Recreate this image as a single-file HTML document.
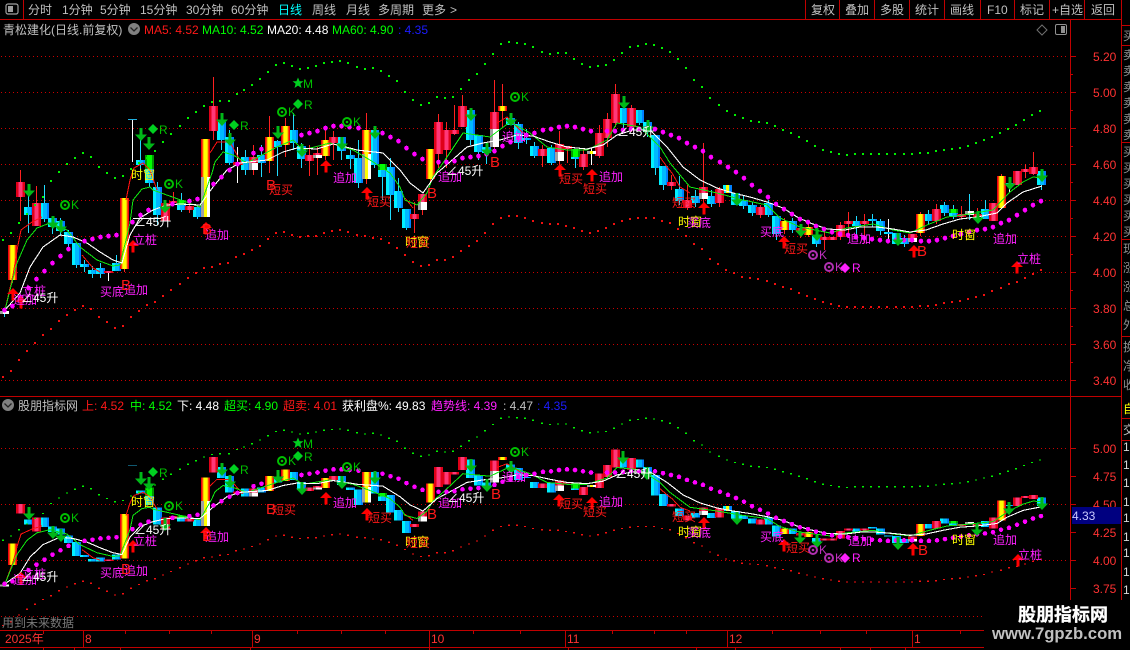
<!DOCTYPE html>
<html><head><meta charset="utf-8"><style>
html,body{margin:0;padding:0;background:#000;width:1130px;height:650px;overflow:hidden}
svg{display:block}
text{font-family:"Liberation Sans","WenQuanYi Zen Hei","Noto Sans CJK SC",sans-serif;font-size:12px}
.m{fill:#ff20ff}.r{fill:#ff1818}.y{fill:#ffff00}.w{fill:#fff}.g{fill:#00c000}.p{fill:#c030c0}
.t{fill:#c0c0c0}.a{fill:#ff3232}.b{fill:#1c1cff}.n{fill:#00ff00}.h{fill:#909090}
.B{font-size:15px}
</style></head><body>
<svg xmlns="http://www.w3.org/2000/svg" width="1130" height="650" viewBox="0 0 1130 650">
<defs>
<path id="bl" fill="none" d="M28.5 207V215M44.5 203V219M52.5 218V227M60.5 221V231M68.5 232V244M76.5 243V265M84.5 264V267M92.5 270V274M100.5 268V274M116.5 263V271M140.5 160V165M149.5 169V183M157.5 187V215M181.5 205V210M197.5 207V217M221.5 122V140M229.5 137V163M245.5 157V170M261.5 155V163M277.5 141V147M293.5 130V143M301.5 146V159M341.5 137V151M350.5 155V159M358.5 158V183M374.5 130V165M382.5 170V177M390.5 167V195M398.5 191V208M406.5 209V228M470.5 110V140M478.5 135V152M486.5 147V153M510.5 118V125M518.5 124V143M526.5 138V140M534.5 146V156M551.5 148V163M575.5 157V159M623.5 108V123M639.5 110V123M647.5 122V132M655.5 135V168M663.5 166V185M679.5 189V201M695.5 196V203M711.5 196V204M727.5 185V193M735.5 193V205M743.5 200V206M752.5 205V213M768.5 203V215M776.5 216V234M792.5 221V230M816.5 236V244M856.5 221V226M872.5 219V221M880.5 221V231M888.5 232V234M896.5 233V244M904.5 238V244M928.5 214V221M944.5 205V213M953.5 213V217M985.5 209V219M1009.5 183V185M1041.5 171V185"/>
<path id="rd" fill="none" d="M20.5 182V197M36.5 203V226M108.5 271V273M165.5 203V221M173.5 201V203M189.5 206V210M213.5 106V131M237.5 162V165M253.5 157V163M309.5 155V161M317.5 153V155M333.5 137V143M414.5 214V219M422.5 194V202M438.5 122V154M446.5 130V150M454.5 130V134M462.5 106V127M494.5 112V129M542.5 149V156M559.5 144V152M567.5 146V149M583.5 154V167M599.5 133V156M607.5 119V138M615.5 94V123M631.5 108V127M671.5 182V186M687.5 200V208M703.5 187V193M719.5 189V203M760.5 207V215M800.5 228V232M824.5 237V240M832.5 237V240M840.5 225V237M848.5 221V224M864.5 221V224M912.5 234V238M936.5 209V221M961.5 214V217M977.5 214V217M993.5 203V221M1017.5 171V185M1025.5 169V172M1033.5 167V174"/>
<path id="yl" fill="none" d="M12.5 245V280M124.5 198V269M205.5 139V177M269.5 137V161M285.5 126V145M325.5 140V156M366.5 130V154M430.5 149V179M502.5 106V111M784.5 221V230M808.5 227V235M920.5 214V233M1001.5 176V208"/>
<path id="gy" fill="none" d="M4.5 311V314M205.5 177V217M253.5 163V170M317.5 155V158M366.5 154V179M422.5 202V210M494.5 129V147M559.5 152V161M591.5 151V154M703.5 193V199M912.5 238V242M969.5 211V215"/>
<path id="gn" fill="none" d="M149.5 155V169M181.5 200V205M382.5 164V170M575.5 149V157M953.5 209V213"/>
<path id="yc" fill="none" d="M205.5 177V217M366.5 154V179M727.5 185V193M591.5 151V154"/>
<path id="dm" fill="none" vector-effect="non-scaling-stroke" stroke-linecap="round" d="M4.5 310v.1M12.5 306v.1M20.5 298v.1M28.5 288v.1M36.5 279v.1M44.5 271v.1M52.5 263v.1M60.5 256v.1M68.5 249v.1M84.5 241v.1M92.5 239v.1M100.5 237v.1M108.5 236v.1M116.5 235v.1M132.5 222v.1M140.5 215v.1M148.5 210v.1M172.5 204v.1M189.5 201v.1M197.5 199v.1M213.5 184v.1M221.5 177v.1M229.5 170v.1M237.5 164v.1M253.5 153v.1M261.5 149v.1M301.5 135v.1M309.5 133v.1M317.5 131v.1M325.5 128v.1M333.5 126v.1M341.5 126v.1M349.5 127v.1M358.5 128v.1M382.5 133v.1M390.5 137v.1M398.5 141v.1M406.5 148v.1M414.5 154v.1M422.5 159v.1M438.5 162v.1M446.5 162v.1M454.5 161v.1M462.5 158v.1M470.5 157v.1M478.5 156v.1M486.5 154v.1M494.5 151v.1M502.5 146v.1M510.5 142v.1M518.5 138v.1M526.5 135v.1M534.5 133v.1M543 130v.1M551 129v.1M559 127v.1M567 126v.1M575 127v.1M583 129v.1M591 131v.1M607 131v.1M615 131v.1M623 130v.1M631 129v.1M639 129v.1M647 128v.1M655 129v.1M663 132v.1M671 135v.1M679 138v.1M687 143v.1M695 147v.1M703 151v.1M711 157v.1M720 162v.1M728 167v.1M736 172v.1M744 178v.1M752 185v.1M760 191v.1M768 197v.1M776 204v.1M784 209v.1M792 214v.1M800 219v.1M808 222v.1M816 226v.1M824 229v.1M832 232v.1M840 234v.1M848 235v.1M856 237v.1M864 238v.1M872 239v.1M880 240v.1M888 241v.1M896 240v.1M904 240v.1M912 240v.1M921 241v.1M929 241v.1M937 240v.1M945 238v.1M953 236v.1M961 234v.1M969 232v.1M977 230v.1M985 229v.1M993 227v.1M1001 223v.1M1009 220v.1M1017 215v.1M1025 210v.1M1033 205v.1M1041 201v.1"/>
<path id="dg" fill="none" vector-effect="non-scaling-stroke" d="M3 239v2M11 232v2M19 222v2M27 213v2M35 204v2M43 196v2M51 180v2M59 171v2M67 163v2M75 157v2M83 152v2M91 156v2M99 166v2M107 172v2M115 177v2M123 175v2M131 168v2M139 162v2M147 157v2M155 150v2M163 141v2M171 133v2M180 125v2M188 117v2M196 111v2M204 105v2M212 101v2M220 100v2M229 100v2M237 93v2M244 89v2M252 84v2M260 78v2M268 71v2M276 64v2M284 62v2M292 65v2M300 68v2M308 67v2M316 65v2M324 62v2M332 61v2M340 60v2M348 62v2M357 66v2M365 68v2M373 67v2M381 70v2M389 75v2M397 80v2M405 91v2M413 99v2M421 104v2M429 102v2M437 96v2M445 97v2M453 96v2M461 88v2M469 79v2M477 73v2M485 63v2M493 53v2M501 43v2M509 41v2M517 42v2M525 43v2M533 46v2M542 51v2M550 53v2M558 52v2M566 52v2M574 58v2M582 63v2M590 66v2M598 65v2M606 64v2M614 59v2M622 52v2M630 46v2M638 45v2M646 43v2M654 44v2M662 47v2M670 51v2M678 58v2M686 67v2M694 79v2M702 86v2M710 97v2M719 104v2M727 110v2M735 114v2M743 117v2M751 120v2M759 121v2M767 122v2M775 125v2M783 129v2M791 132v2M799 136v2M807 140v2M815 145v2M823 149v2M831 151v2M839 153v2M847 154v2M855 153v2M863 153v2M871 153v2M879 153v2M887 153v2M895 153v2M904 153v2M912 153v2M920 152v2M928 152v2M936 150v2M944 149v2M952 148v2M960 147v2M968 145v2M976 142v2M984 139v2M992 136v2M1000 132v2M1008 128v2M1016 124v2M1024 119v2M1032 114v2M1040 110v2"/>
<path id="dr" fill="none" vector-effect="non-scaling-stroke" d="M3 376v2M11 370v2M19 359v2M27 350v2M35 342v2M43 334v2M51 328v2M59 320v2M67 314v2M75 309v2M83 305v2M91 308v2M99 316v2M107 321v2M115 327v2M123 325v2M131 316v2M139 310v2M147 304v2M155 301v2M163 295v2M171 289v2M180 283v2M188 277v2M196 272v2M204 267v2M212 266v2M220 263v2M228 262v2M236 256v2M244 253v2M252 249v2M260 245v2M268 238v2M276 232v2M284 231v2M292 234v2M300 236v2M308 235v2M316 235v2M324 232v2M332 230v2M340 229v2M348 231v2M357 234v2M365 235v2M373 237v2M381 238v2M389 242v2M397 247v2M405 254v2M413 261v2M421 265v2M429 264v2M437 259v2M445 259v2M453 256v2M461 250v2M469 245v2M477 240v2M485 232v2M493 223v2M501 217v2M509 215v2M517 215v2M525 217v2M533 220v2M542 222v2M550 223v2M558 223v2M566 225v2M574 227v2M582 230v2M590 232v2M598 230v2M606 227v2M614 223v2M622 220v2M630 218v2M638 217v2M646 217v2M654 217v2M662 220v2M670 222v2M678 228v2M686 235v2M694 243v2M702 248v2M710 258v2M718 263v2M726 269v2M734 272v2M742 276v2M750 277v2M758 278v2M767 280v2M775 283v2M783 286v2M791 288v2M799 292v2M807 295v2M815 298v2M823 301v2M831 303v2M839 305v2M847 306v2M855 306v2M863 306v2M871 306v2M879 306v2M887 306v2M896 306v2M904 306v2M912 306v2M920 305v2M928 305v2M936 304v2M944 302v2M952 301v2M960 300v2M968 298v2M976 296v2M984 294v2M992 290v2M1001 287v2M1009 283v2M1017 281v2M1025 277v2M1033 273v2M1041 269v2"/>
<polyline id="lw" fill="none" vector-effect="non-scaling-stroke" points="5,310 20,293 30,267 43,247 60,235 73,237 87,243 100,252 113,260 122,263 130,235 140,218 153,210 167,205 180,204 200,205 213,187 227,170 240,163 267,160 283,152 297,148 317,149 333,144 350,148 357,150 383,153 400,170 410,183 423,193 437,173 450,162 467,147 483,143 500,140 517,135 533,136 550,142 567,147 587,149 603,145 617,135 633,130 650,130 667,147 683,167 700,180 717,188 733,193 750,197 767,202 783,208 797,217 810,223 827,229 845,230 860,227 877,227 893,229 910,232 926,230 943,224 960,219 977,217 997,213 1007,203 1023,192 1042,186"/>
<polyline id="lg" fill="none" vector-effect="non-scaling-stroke" points="5,310 10,290 17,263 27,240 37,228 50,223 67,230 80,247 97,260 113,266 120,265 130,223 133,200 142,189 150,187 153,190 200,207 212,173 215,162 223,152 233,155 247,163 277,147 293,140 303,150 330,143 353,150 370,160 390,173 400,187 405,200 417,205 427,193 433,177 443,163 463,133 490,137 510,122 530,133 547,147 567,150 587,150 607,140 617,123 640,127 660,147 670,163 690,187 717,193 743,200 767,205 780,218 800,227 830,233 847,228 873,224 893,230 910,233 927,225 947,217 963,215 993,210 1010,192 1023,182 1033,177 1042,178"/>
<path id="lr" fill="none" vector-effect="non-scaling-stroke" d="M5 310L13 275L18 245L21 230L32 222L42 217M82 255L93 268L100 272M126 200L130 180L134 168L143 163L150 170L157 190M210 153L217 142L230 142L237 155L243 165M405 198L413 208M497 123L507 117L523 133M660 157L667 167L672 173L680 187L690 193"/>
<g id="bodies" shape-rendering="crispEdges">
<use href="#bl" stroke="#0080ff" stroke-width="9"/><use href="#bl" x="-1" stroke="#00b8ff" stroke-width="7"/><use href="#bl" x="-3" stroke="#00f0ff" stroke-width="3"/>
<use href="#rd" stroke="#e00018" stroke-width="9"/><use href="#rd" stroke="#ff3878" stroke-width="4"/>
<use href="#yl" stroke="#f00010" stroke-width="9"/><use href="#yl" stroke="#ff9000" stroke-width="6"/><use href="#yl" stroke="#ffff00" stroke-width="4"/>
<use href="#gy" stroke="#a0a0a0" stroke-width="9"/><use href="#gy" x="1.5" stroke="#fff" stroke-width="6"/>
<use href="#gn" stroke="#009a00" stroke-width="9"/><use href="#gn" stroke="#00ff00" stroke-width="5"/>
<use href="#yc" stroke="#ffff00" stroke-width="3"/>
<path d="M128 119.5H137" stroke="#20b0e0" stroke-width="1"/>
</g>
<g id="ov" shape-rendering="crispEdges">
<use href="#dr" stroke="#f01010" stroke-width="2"/>
<use href="#dg" stroke="#00f000" stroke-width="2"/>
<use href="#lr" stroke="#ff1010" stroke-width="1"/>
<use href="#lg" stroke="#10e810" stroke-width="1"/>
<use href="#lw" stroke="#fff" stroke-width="1.1"/>
<use href="#dm" stroke="#ff00ff" stroke-width="4.6"/>
</g>
<path id="ga" fill="#00b818" d="M-1.5 0h3v6.5h4.5L0 13l-6-6.5h4.5z"/>
<path id="ra" fill="#ff0000" d="M0 0l6 6h-4.5v6.5h-3V6H-6z"/>
<g id="ok"><circle r="4" fill="none" stroke-width="2"/><circle r="1.3" stroke="none"/></g>
<path id="di" d="M0-5L5 0L0 5L-5 0z"/>
<path id="st" d="M0-5.5L1.6-1.7L5.5-1.7L2.4.8L3.5 5L0 2.6L-3.5 5L-2.4.8L-5.5-1.7L-1.6-1.7z"/>
</defs>

<g stroke="#cc0000" stroke-dasharray="1 3" fill="none" shape-rendering="crispEdges">
<path d="M1 56.5H1068M1 92.5H1068M1 128.5H1068M1 164.5H1068M1 200.5H1068M1 236.5H1068M1 272.5H1068M1 308.5H1068M1 344.5H1068M1 380.5H1068"/>
<path d="M1 448.5H1068M1 504.5H1068M1 560.5H1068M1 616.5H1068"/>
</g>

<g fill="none" stroke-width="1" shape-rendering="crispEdges">
<path stroke="#20dcff" d="M28.5 193V233M44.5 185V222M52.5 218V234M60.5 218V236M68.5 230V248M76.5 243V268M84.5 260V272M92.5 266V278M100.5 263V278M116.5 255V271M140.5 135V178M149.5 183V187M157.5 182V225M181.5 193V212M197.5 205V219M221.5 117V150M229.5 130V165M245.5 150V175M261.5 145V177M277.5 140V176M293.5 113V150M301.5 143V168M341.5 137V160M350.5 150V169M358.5 140V188M374.5 126V168M382.5 165V200M390.5 158V220M398.5 178V212M406.5 209V230M470.5 108V145M478.5 135V160M486.5 143V164M518.5 122V149M526.5 129V144M534.5 142V158M551.5 145V165M575.5 149V168M623.5 108V130M639.5 110V125M647.5 122V137M655.5 135V175M663.5 166V190M679.5 176V205M695.5 190V207M711.5 190V207M743.5 196V209M752.5 202V216M768.5 200V217M776.5 216V240M792.5 218V233M816.5 236V247M856.5 216V236M872.5 214V227M880.5 219V235M904.5 235V247M928.5 210V224M944.5 202V216M953.5 205V219M969.5 194V220M985.5 200V219M1041.5 171V190M4.5 309V317"/>
<path stroke="#ff2020" d="M12.5 280V283M20.5 170V221M36.5 186V226M124.5 269V272M173.5 192V204M189.5 200V213M213.5 77V140M253.5 145V175M269.5 116V173M285.5 118V157M309.5 145V176M317.5 147V175M325.5 130V160M333.5 131V160M366.5 113V184M414.5 202V233M422.5 210V215M430.5 179V184M438.5 114V168M446.5 122V168M454.5 105V135M462.5 95V127M494.5 80V152M502.5 84V127M542.5 145V167M559.5 131V165M567.5 146V163M583.5 148V170M599.5 125V158M607.5 113V147M615.5 84V127M631.5 105V132M671.5 175V190M687.5 185V210M703.5 143V205M719.5 187V207M760.5 205V218M784.5 218V234M800.5 224V238M808.5 224V237M824.5 227V250M840.5 222V240M848.5 212V237M864.5 214V243M920.5 212V236M936.5 204V224M961.5 206V219M977.5 208V220M1025.5 164V178M1033.5 152V175M1001.5 174V208"/>
<path stroke="#fff" d="M108.5 271V281M132.5 119V162M237.5 147V183M888.5 219V239M1009.5 185V193M591.5 148V165M104 272.5H113M133 218.5H162"/>
</g>
<use href="#bodies"/>
<use href="#ov"/>

<!-- bottom panel series -->
<g transform="matrix(1 0 0 .6222 0 390.95)">
<use href="#bodies"/>
<use href="#ov"/>
</g>

<!-- top arrows -->
<g>
<use href="#ga" x="29" y="184"/><use href="#ga" x="53" y="216"/><use href="#ga" x="61" y="220"/><use href="#ga" x="141" y="128"/><use href="#ga" x="149" y="137"/><use href="#ga" x="165" y="200"/><use href="#ga" x="222" y="113"/><use href="#ga" x="230" y="133"/><use href="#ga" x="278" y="126"/><use href="#ga" x="302" y="144"/><use href="#ga" x="342" y="137"/><use href="#ga" x="375" y="126"/><use href="#ga" x="471" y="108"/><use href="#ga" x="487" y="143"/><use href="#ga" x="511" y="113"/><use href="#ga" x="624" y="96"/><use href="#ga" x="648" y="120"/><use href="#ga" x="737" y="193"/><use href="#ga" x="801" y="224"/><use href="#ga" x="817" y="228"/><use href="#ga" x="898" y="233"/><use href="#ga" x="978" y="211"/><use href="#ga" x="1010" y="177"/><use href="#ga" x="1042" y="169"/>
<use href="#ra" x="13" y="288"/><use href="#ra" x="21" y="296"/><use href="#ra" x="133" y="240"/><use href="#ra" x="206" y="222"/><use href="#ra" x="326" y="160"/><use href="#ra" x="367" y="187"/><use href="#ra" x="560" y="164"/><use href="#ra" x="592" y="169"/><use href="#ra" x="704" y="202"/><use href="#ra" x="784" y="236"/><use href="#ra" x="914" y="245"/><use href="#ra" x="1017" y="261"/>
<!-- bottom arrows -->
<use href="#ga" x="29" y="507"/><use href="#ga" x="53" y="526"/><use href="#ga" x="61" y="529"/><use href="#ga" x="141" y="472"/><use href="#ga" x="149" y="477"/><use href="#ga" x="165" y="518"/><use href="#ga" x="222" y="463"/><use href="#ga" x="230" y="475"/><use href="#ga" x="278" y="470"/><use href="#ga" x="302" y="482"/><use href="#ga" x="342" y="476"/><use href="#ga" x="375" y="471"/><use href="#ga" x="471" y="459"/><use href="#ga" x="487" y="479"/><use href="#ga" x="511" y="461"/><use href="#ga" x="623" y="451"/><use href="#ga" x="647" y="467"/><use href="#ga" x="737" y="512"/><use href="#ga" x="800" y="531"/><use href="#ga" x="817" y="535"/><use href="#ga" x="898" y="537"/><use href="#ga" x="977" y="523"/><use href="#ga" x="1009" y="502"/><use href="#ga" x="1042" y="497"/>
<use href="#ra" x="21" y="572"/><use href="#ra" x="133" y="540"/><use href="#ra" x="206" y="527"/><use href="#ra" x="326" y="492"/><use href="#ra" x="367" y="508"/><use href="#ra" x="559" y="494"/><use href="#ra" x="592" y="497"/><use href="#ra" x="704" y="517"/><use href="#ra" x="784" y="539"/><use href="#ra" x="913" y="543"/><use href="#ra" x="1018" y="554"/>
</g>

<!-- marks -->
<g fill="#00c000" stroke="#00c000">
<use href="#ok" x="65" y="205"/><use href="#ok" x="169" y="184"/><use href="#ok" x="282" y="112"/><use href="#ok" x="347" y="122"/><use href="#ok" x="515" y="97"/>
<use href="#ok" x="65" y="518"/><use href="#ok" x="169" y="506"/><use href="#ok" x="282" y="461"/><use href="#ok" x="347" y="467"/><use href="#ok" x="515" y="452"/>
</g>
<g fill="#00d020">
<use href="#di" x="153" y="129"/><use href="#di" x="234" y="125"/><use href="#di" x="298" y="104"/><use href="#st" x="298" y="83"/>
<use href="#di" x="153" y="472"/><use href="#di" x="234" y="469"/><use href="#di" x="298" y="456"/><use href="#st" x="298" y="443"/>
</g>
<g fill="#b030b0" stroke="#b030b0">
<use href="#ok" x="813" y="255"/><use href="#ok" x="829" y="267"/><use href="#ok" x="813" y="550"/><use href="#ok" x="829" y="558"/>
</g>
<g fill="#ff20ff"><use href="#di" x="845" y="268"/><use href="#di" x="845" y="558"/></g>
<g class="g">
<text x="71" y="209">K</text><text x="175" y="188">K</text><text x="288" y="116">K</text><text x="353" y="126">K</text><text x="521" y="101">K</text>
<text x="71" y="522">K</text><text x="175" y="510">K</text><text x="288" y="465">K</text><text x="353" y="471">K</text><text x="521" y="456">K</text>
<text x="159" y="134">R</text><text x="240" y="130">R</text><text x="304" y="109">R</text><text x="303" y="88">M</text>
<text x="159" y="477">R</text><text x="240" y="474">R</text><text x="304" y="461">R</text><text x="303" y="448">M</text>
</g>
<g class="p"><text x="819" y="259">K</text><text x="835" y="271">K</text><text x="819" y="554">K</text><text x="835" y="562">K</text></g>
<g class="m"><text x="852" y="272">R</text><text x="852" y="562">R</text></g>

<!-- top labels -->
<text class="m" x="22" y="295">立桩</text><text class="m" x="13" y="304">追加</text><text class="w" x="21" y="302">∠45升</text>
<text class="m" x="100" y="296">买底</text><text class="m" x="124" y="294">追加</text><text class="r B" x="121" y="290">B</text>
<text class="m" x="133" y="244">立桩</text><text class="y" x="131" y="179">时窗</text><text class="w" x="134" y="226">∠45升</text>
<text class="m" x="205" y="239">追加</text><text class="r B" x="202" y="234">B</text>
<text class="r" x="269" y="194">短买</text><text class="r B" x="266" y="190">B</text>
<text class="m" x="333" y="182">追加</text><text class="r" x="367" y="206">短买</text>
<text class="y" x="405" y="246">时窗</text><text class="r" x="406" y="247">短买</text><text class="r B" x="427" y="198">B</text>
<text class="m" x="438" y="181">追加</text><text class="w" x="446" y="175">∠45升</text><text class="r B" x="490" y="167">B</text>
<text class="m" x="502" y="141">追加</text><text class="r" x="559" y="183">短买</text><text class="r" x="583" y="193">短买</text><text class="m" x="599" y="181">追加</text>
<text class="w" x="617" y="136">∠45升</text><text class="r" x="672" y="207">短买</text><text class="y" x="678" y="226">时窗</text><text class="m" x="687" y="227">买底</text>
<text class="m" x="760" y="236">买底</text><text class="r" x="784" y="253">短买</text><text class="m" x="847" y="243">追加</text>
<text class="y" x="952" y="239">时窗</text><text class="r B" x="917" y="256">B</text><text class="m" x="993" y="243">追加</text><text class="m" x="1017" y="263">立桩</text>

<!-- bottom labels -->
<text class="m" x="22" y="578">立桩</text><text class="m" x="13" y="584">追加</text><text class="w" x="21" y="581">∠45升</text>
<text class="y" x="131" y="506">时窗</text><text class="w" x="134" y="534">∠45升</text><text class="m" x="133" y="545">立桩</text>
<text class="m" x="100" y="577">买底</text><text class="m" x="124" y="575">追加</text><text class="r B" x="121" y="574">B</text>
<text class="m" x="205" y="541">追加</text><text class="r B" x="202" y="541">B</text>
<text class="r" x="272" y="514">短买</text><text class="r B" x="266" y="514">B</text>
<text class="m" x="333" y="507">追加</text><text class="r" x="368" y="522">短买</text>
<text class="y" x="405" y="546">时窗</text><text class="r" x="406" y="547">短买</text><text class="r B" x="427" y="519">B</text>
<text class="m" x="438" y="507">追加</text><text class="w" x="447" y="502">∠45升</text><text class="r B" x="491" y="499">B</text>
<text class="m" x="502" y="481">追加</text><text class="r" x="559" y="508">短买</text><text class="r" x="583" y="516">短买</text><text class="m" x="599" y="506">追加</text>
<text class="w" x="615" y="478">∠45升</text><text class="r" x="672" y="521">短买</text><text class="y" x="678" y="536">时窗</text><text class="m" x="687" y="537">买底</text>
<text class="m" x="760" y="541">买底</text><text class="r" x="786" y="552">短买</text><text class="m" x="848" y="545">追加</text>
<text class="y" x="952" y="544">时窗</text><text class="r B" x="918" y="555">B</text><text class="m" x="993" y="544">追加</text><text class="m" x="1018" y="559">立桩</text>
<text x="2" y="627" style="fill:#787878">用到未来数据</text>

<!-- frame -->
<g stroke="#c00000" fill="none" shape-rendering="crispEdges">
<path d="M0 19.5H1122M0 396.5H1122M0 630.5H1122M0 647.5H1130M23.5 0V19M805.5 0V19M839.5 0V19M874.5 0V19M909.5 0V19M944.5 0V19M980.5 0V19M1014.5 0V19M1049.5 0V19M1084.5 0V19M1121.5 0V630M1070.5 19V630"/>
<path d="M1122 25.5H1130M1122 45.5H1130M1122 142.5H1130M1122 239.5H1130M1122 336.5H1130M1122 418.5H1130M1122 440.5H1130"/>
<path d="M1071 56.5H1076M1071 92.5H1076M1071 128.5H1076M1071 164.5H1076M1071 200.5H1076M1071 236.5H1076M1071 272.5H1076M1071 308.5H1076M1071 344.5H1076M1071 380.5H1076M1071 74.5H1073M1071 110.5H1073M1071 146.5H1073M1071 182.5H1073M1071 218.5H1073M1071 254.5H1073M1071 290.5H1073M1071 326.5H1073M1071 362.5H1073"/>
<path d="M1071 448.5H1076M1071 476.5H1076M1071 504.5H1076M1071 532.5H1076M1071 560.5H1076M1071 588.5H1076"/>
<path d="M83.5 630V647M252.5 630V647M429.5 630V647M565.5 630V647M727.5 630V647M912.5 630V647M43.5 630V634M125.5 630V634M169.5 630V634M211.5 630V634M297.5 630V634M341.5 630V634M385.5 630V634M473.5 630V634M520.5 630V634M612.5 630V634M654.5 630V634M686.5 630V634M772.5 630V634M820.5 630V634M866.5 630V634M960.5 630V634M43.5 647V650M74.5 647V650M120.5 647V650M250.5 647V650M429.5 647V650M568.5 647V650M696.5 647V650M735.5 647V650M840.5 647V650M870.5 647V650M905.5 647V650"/>
</g>

<!-- toolbar -->
<rect x="6" y="4" width="12" height="10" rx="2" fill="none" stroke="#a0a0a0" stroke-width="1.2"/><rect x="8" y="6" width="5" height="6" fill="#a0a0a0"/>
<g class="t">
<text x="28" y="14">分时</text><text x="62" y="14">1分钟</text><text x="100" y="14">5分钟</text><text x="140" y="14">15分钟</text><text x="186" y="14">30分钟</text><text x="231" y="14">60分钟</text>
<text x="278" y="14" style="fill:#00ffff">日线</text><text x="312" y="14">周线</text><text x="346" y="14">月线</text><text x="378" y="14">多周期</text><text x="422" y="14">更多</text><text x="450" y="14">&gt;</text>
<text x="811" y="14">复权</text><text x="845" y="14">叠加</text><text x="880" y="14">多股</text><text x="915" y="14">统计</text><text x="950" y="14">画线</text><text x="987" y="14">F10</text><text x="1020" y="14">标记</text><text x="1052" y="14">+自选</text><text x="1091" y="14">返回</text>
</g>

<!-- legends -->
<text class="t" x="3" y="34">青松建化(日线.前复权)</text>
<circle cx="134" cy="29" r="6" fill="#808080"/><path d="M130.5 27.5L134 31L137.5 27.5" fill="none" stroke="#222" stroke-width="1.3"/>
<text class="r" x="144" y="34">MA5: 4.52</text><text class="n" x="202" y="34">MA10: 4.52</text><text class="w" x="267" y="34">MA20: 4.48</text><text class="n" x="332" y="34">MA60: 4.90</text><text class="b" x="398" y="34">: 4.35</text>
<path d="M1042 25L1047 30L1042 35L1037 30z" fill="none" stroke="#707070"/>
<rect x="1055.5" y="24.5" width="11" height="10" rx="1.5" fill="none" stroke="#909090"/><rect x="1061" y="26" width="4" height="7" fill="#909090"/>

<circle cx="8" cy="405" r="6" fill="#808080"/><path d="M4.5 403.5L8 407L11.5 403.5" fill="none" stroke="#222" stroke-width="1.3"/>
<text class="t" x="18" y="410">股朋指标网</text>
<text class="r" x="82" y="410">上: 4.52</text><text class="n" x="130" y="410">中: 4.52</text><text class="w" x="177" y="410">下: 4.48</text><text class="n" x="224" y="410">超买: 4.90</text><text class="r" x="283" y="410">超卖: 4.01</text><text class="w" x="342" y="410">获利盘%: 49.83</text><text class="m" x="431" y="410">趋势线: 4.39</text><text class="t" x="503" y="410">: 4.47</text><text class="b" x="537" y="410">: 4.35</text>

<!-- axis labels -->
<g class="a">
<text x="1093" y="61">5.20</text><text x="1093" y="97">5.00</text><text x="1093" y="133">4.80</text><text x="1093" y="169">4.60</text><text x="1093" y="205">4.40</text><text x="1093" y="241">4.20</text><text x="1093" y="277">4.00</text><text x="1093" y="313">3.80</text><text x="1093" y="349">3.60</text><text x="1093" y="385">3.40</text>
<text x="1093" y="453">5.00</text><text x="1093" y="481">4.75</text><text x="1093" y="509">4.50</text><text x="1093" y="537">4.25</text><text x="1093" y="565">4.00</text><text x="1093" y="593">3.75</text>
<text x="5" y="643">2025年</text><text x="85" y="643">8</text><text x="254" y="643">9</text><text x="431" y="643">10</text><text x="567" y="643">11</text><text x="729" y="643">12</text><text x="914" y="643">1</text>
</g>
<rect x="1072" y="507" width="49" height="17" fill="#000080"/><text x="1072" y="520" style="fill:#c8c8ff">4.33</text>

<!-- right strip -->
<g class="h">
<text x="1123" y="40">买</text><text x="1123" y="59">卖</text><text x="1123" y="75">卖</text><text x="1123" y="91">卖</text><text x="1123" y="107">卖</text><text x="1123" y="123">卖</text><text x="1123" y="139">卖</text>
<text x="1123" y="156">买</text><text x="1123" y="172">买</text><text x="1123" y="188">买</text><text x="1123" y="204">买</text><text x="1123" y="220">买</text><text x="1123" y="236">买</text>
<text x="1123" y="253">现</text><text x="1123" y="272">涨</text><text x="1123" y="291">涨</text><text x="1123" y="310">总</text><text x="1123" y="329">外</text>
<text x="1123" y="351">换</text><text x="1123" y="370">净</text><text x="1123" y="389">收</text>
<text x="1123" y="434" style="fill:#c0c0c0">交</text>
</g>
<text class="y" x="1123" y="413">自</text>
<g style="fill:#d8d8d8">
<text x="1123" y="451">1</text><text x="1123" y="469">1</text><text x="1123" y="487">1</text><text x="1123" y="506">1</text><text x="1123" y="522">1</text><text x="1123" y="541">1</text><text x="1123" y="557">1</text><text x="1123" y="576">1</text><text x="1123" y="594">1</text>
</g>

<!-- watermark -->
<rect x="984" y="600" width="146" height="50" fill="#000"/>
<text x="1018" y="621" style="font-size:18px;font-weight:bold;fill:#fff;stroke:#fff;stroke-width:.3">股朋指标网</text>
<text x="992" y="639" style="font-size:16.7px;font-weight:bold;fill:#c0c0c0">www.7gpzb.com</text>
</svg>
</body></html>
